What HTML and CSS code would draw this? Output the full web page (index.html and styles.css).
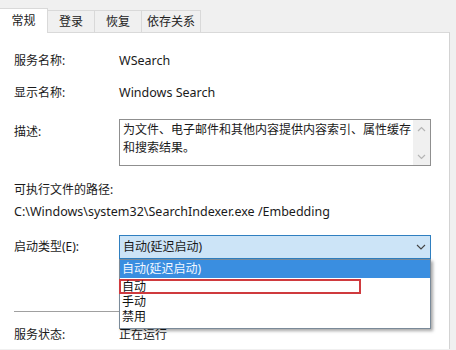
FILE: index.html
```html
<!DOCTYPE html>
<html lang="zh-CN">
<head>
  <meta charset="UTF-8">
  <title>WSearch 属性</title>
  <link rel="stylesheet" href="styles.css">
</head>
<body>
  <div class="tabs">
    <div class="tab active">常规</div>
    <div class="tab">登录</div>
    <div class="tab">恢复</div>
    <div class="tab wide">依存关系</div>
  </div>

  <div class="panel">
    <div class="row first">
      <span class="label">服务名称:</span>
      <span class="latin">WSearch</span>
    </div>
    <div class="row">
      <span class="label">显示名称:</span>
      <span class="latin">Windows Search</span>
    </div>
    <div class="row desc-row">
      <span class="label desc-label">描述:</span>
      <div class="desc-box">
        <div class="desc-text">为文件、电子邮件和其他内容提供内容索引、属性缓存和搜索结果。</div>
        <div class="scroll">
          <svg width="9" height="6" viewBox="0 0 9 6"><path d="M1 5 L4.5 1.5 L8 5" fill="none" stroke="#b5b5b5" stroke-width="1.2"/></svg>
          <svg width="9" height="6" viewBox="0 0 9 6"><path d="M1 1 L4.5 4.5 L8 1" fill="none" stroke="#b5b5b5" stroke-width="1.2"/></svg>
        </div>
      </div>
    </div>
    <div class="path-label">可执行文件的路径:</div>
    <div class="path latin">C:\Windows\system32\SearchIndexer.exe /Embedding</div>

    <div class="row combo-row">
      <span class="label">启动类型(E):</span>
      <div class="combo">
        <span>自动(延迟启动)</span>
        <svg width="10" height="6" viewBox="0 0 10 6"><path d="M1 1 L5 5 L9 1" fill="none" stroke="#444" stroke-width="1.1"/></svg>
        <div class="dropdown">
          <div class="item selected">自动(延迟启动)</div>
          <div class="item"><div class="mark">自动</div></div>
          <div class="item">手动</div>
          <div class="item">禁用</div>
        </div>
      </div>
    </div>

    <div class="separator"></div>

    <div class="row">
      <span class="label">服务状态:</span>
      <span>正在运行</span>
    </div>
  </div>
</body>
</html>
```

FILE: styles.css
```css
body {
  margin: 0;
  background: #f0f0f0;
  font-family: "Noto Sans", "Noto Sans CJK SC", sans-serif;
  font-size: 12px;
  color: #1a1a1a;
  width: 456px;
  height: 350px;
  overflow: hidden;
}

.latin {
  font-size: 12.5px;
}

.tabs {
  display: flex;
  height: 32px;
  align-items: flex-end;
}

.tab {
  width: 47px;
  height: 22px;
  line-height: 22px;
  text-align: center;
  white-space: nowrap;
  border: 1px solid #d9d9d9;
  border-bottom: none;
  border-left: none;
  background: #f0f0f0;
  color: #222;
  box-sizing: border-box;
}

.tab.wide {
  width: 59px;
}

.tab.active {
  width: 48px;
  background: #fff;
  height: 25px;
  line-height: 24px;
  margin-bottom: -1px;
  position: relative;
}

.panel {
  background: #fff;
  width: 450px;
  height: 317px;
  border-top: 1px solid #d9d9d9;
  border-right: 1px solid #d3d3d3;
  padding-left: 14px;
  box-sizing: border-box;
}

.row {
  display: flex;
  align-items: center;
  line-height: 16px;
  margin-top: 16px;
}

.row.first {
  margin-top: 20px;
}

.label {
  width: 105px;
  flex-shrink: 0;
}

.desc-row {
  align-items: flex-start;
  margin-top: 18px;
}

.desc-label {
  margin-top: 5px;
}

.desc-box {
  width: 312px;
  height: 47px;
  border: 1px solid #8f8f8f;
  box-sizing: border-box;
  display: flex;
}

.desc-text {
  flex: 1;
  padding: 1px 0 1px 3px;
  line-height: 18px;
}

.scroll {
  width: 17px;
  flex-shrink: 0;
  background: #f0f0f0;
  display: flex;
  flex-direction: column;
  justify-content: space-between;
  align-items: center;
  padding: 6px 0 5px;
}

.path-label {
  margin-top: 16px;
  line-height: 16px;
}

.path {
  margin-top: 6px;
  line-height: 16px;
}

.combo-row {
  margin-top: 15px;
}

.combo {
  position: relative;
  width: 312px;
  height: 24px;
  border: 1px solid #2f7fc0;
  background: #cce4f7;
  box-sizing: border-box;
  display: flex;
  align-items: center;
  justify-content: space-between;
  padding: 0 4px 0 3px;
}

.dropdown {
  position: absolute;
  top: 23px;
  left: -1px;
  width: 312px;
  height: 70px;
  background: #fff;
  border: 1px solid #7a8a99;
  box-sizing: border-box;
  box-shadow: 2px 2px 3px rgba(0, 0, 0, 0.35);
  z-index: 2;
}

.item {
  height: 15px;
  line-height: 15px;
  padding-left: 2px;
  color: #111;
}

.item.selected {
  height: 18px;
  line-height: 18px;
  background: #3a8ee0;
  color: #f2f8ff;
  margin-bottom: 1px;
}

.mark {
  width: 242px;
  height: 15px;
  margin-left: -3px;
  padding-left: 1px;
  border: 2px solid #cf3a3e;
  box-sizing: border-box;
  line-height: 11px;
}

.separator {
  width: 300px;
  height: 1px;
  background: #a0a0a0;
  margin-top: 52px;
}

.separator + .row {
  margin-top: 15px;
}
```
